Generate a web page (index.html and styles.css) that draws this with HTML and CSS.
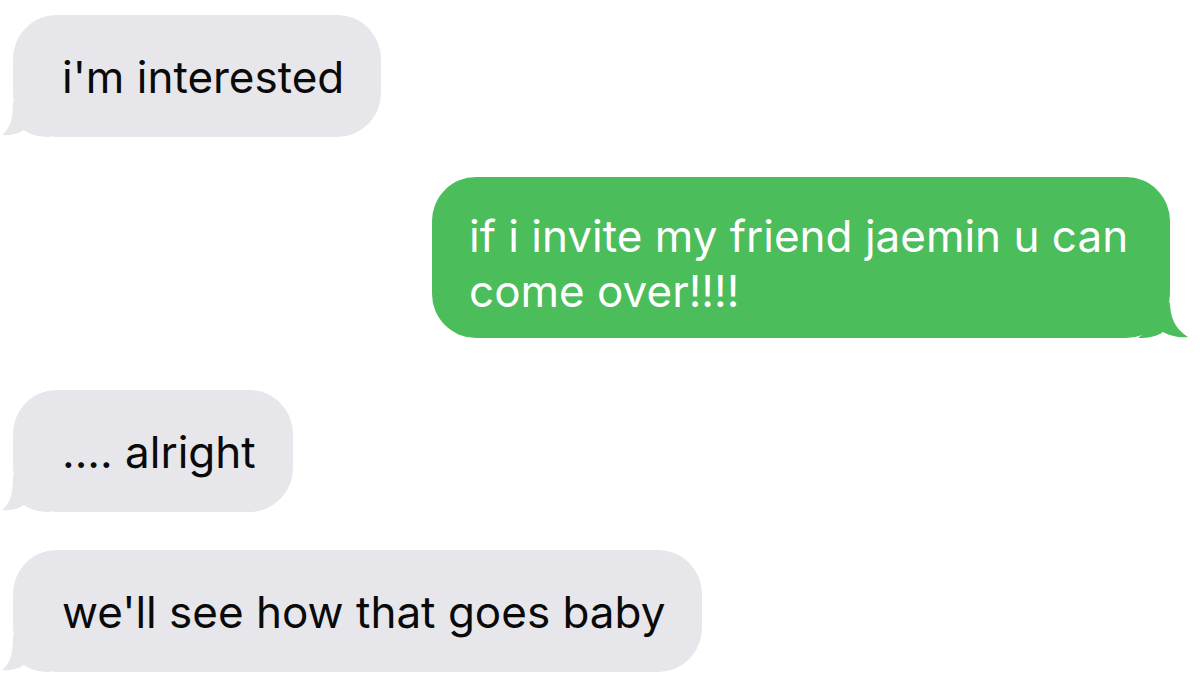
FILE: index.html
```html
<!DOCTYPE html>
<html>
<head>
<meta charset="utf-8">
<link rel="stylesheet" href="styles.css">
</head>
<body>
<div class="thread">
  <div class="bubble recv b1">
    <svg class="tail tail-l" viewBox="0 0 50 36" width="50" height="36"><path d="M12 0 C12 16 10 27 1 34 C9 35 17 33 23 29 C30 34 38 36 50 36 L30 20 Z"/></svg>
    <span class="txt">i'm interested</span>
  </div>
  <div class="bubble sent b2">
    <svg class="tail tail-r" viewBox="0 0 50 36" width="50" height="36"><path d="M18 0 C18 14 14 26 0 35 C9 36 18 34 25 30 C31 34 38 36 50 36 L30 20 Z"/></svg>
    <span class="txt">if i invite my friend jaemin u can come over!!!!</span>
  </div>
  <div class="bubble recv b3">
    <svg class="tail tail-l" viewBox="0 0 50 36" width="50" height="36"><path d="M12 0 C12 16 10 27 1 34 C9 35 17 33 23 29 C30 34 38 36 50 36 L30 20 Z"/></svg>
    <span class="txt">.... alright</span>
  </div>
  <div class="bubble recv b4">
    <svg class="tail tail-l" viewBox="0 0 50 36" width="50" height="36"><path d="M12 0 C12 16 10 27 1 34 C9 35 17 33 23 29 C30 34 38 36 50 36 L30 20 Z"/></svg>
    <span class="txt">we'll see how that goes baby</span>
  </div>
</div>
</body>
</html>
```
FILE: styles.css
```css
html, body {
  margin: 0;
  padding: 0;
  background: #ffffff;
}
.thread {
  width: 1200px;
  height: 680px;
  box-sizing: border-box;
  padding: 15px 30px 0 13px;
  display: flex;
  flex-direction: column;
  font-family: Inter, "Liberation Sans", sans-serif;
  font-size: 44px;
  line-height: 55px;
  overflow: hidden;
}
.bubble {
  position: relative;
  border-radius: 44px;
  box-sizing: border-box;
}
.txt {
  position: relative;
}
.recv {
  align-self: flex-start;
  background: #e6e6eb;
  color: #0a0a0a;
  padding: 35px 37px 0 49px;
}
.sent {
  align-self: flex-end;
  background: #4bbd5b;
  color: #ffffff;
  width: 738px;
  padding: 32px 30px 0 37px;
}
.tail {
  position: absolute;
  bottom: 0;
}
.tail-l {
  left: -12px;
  fill: #e6e6eb;
}
.tail-r {
  right: -18px;
  transform: scaleX(-1);
  fill: #4bbd5b;
}
.b1 { height: 122px; }
.b2 { margin-top: 40px; height: 161px; }
.b3 { margin-top: 52px; height: 122px; }
.b4 { margin-top: 38px; height: 122px; }
```
